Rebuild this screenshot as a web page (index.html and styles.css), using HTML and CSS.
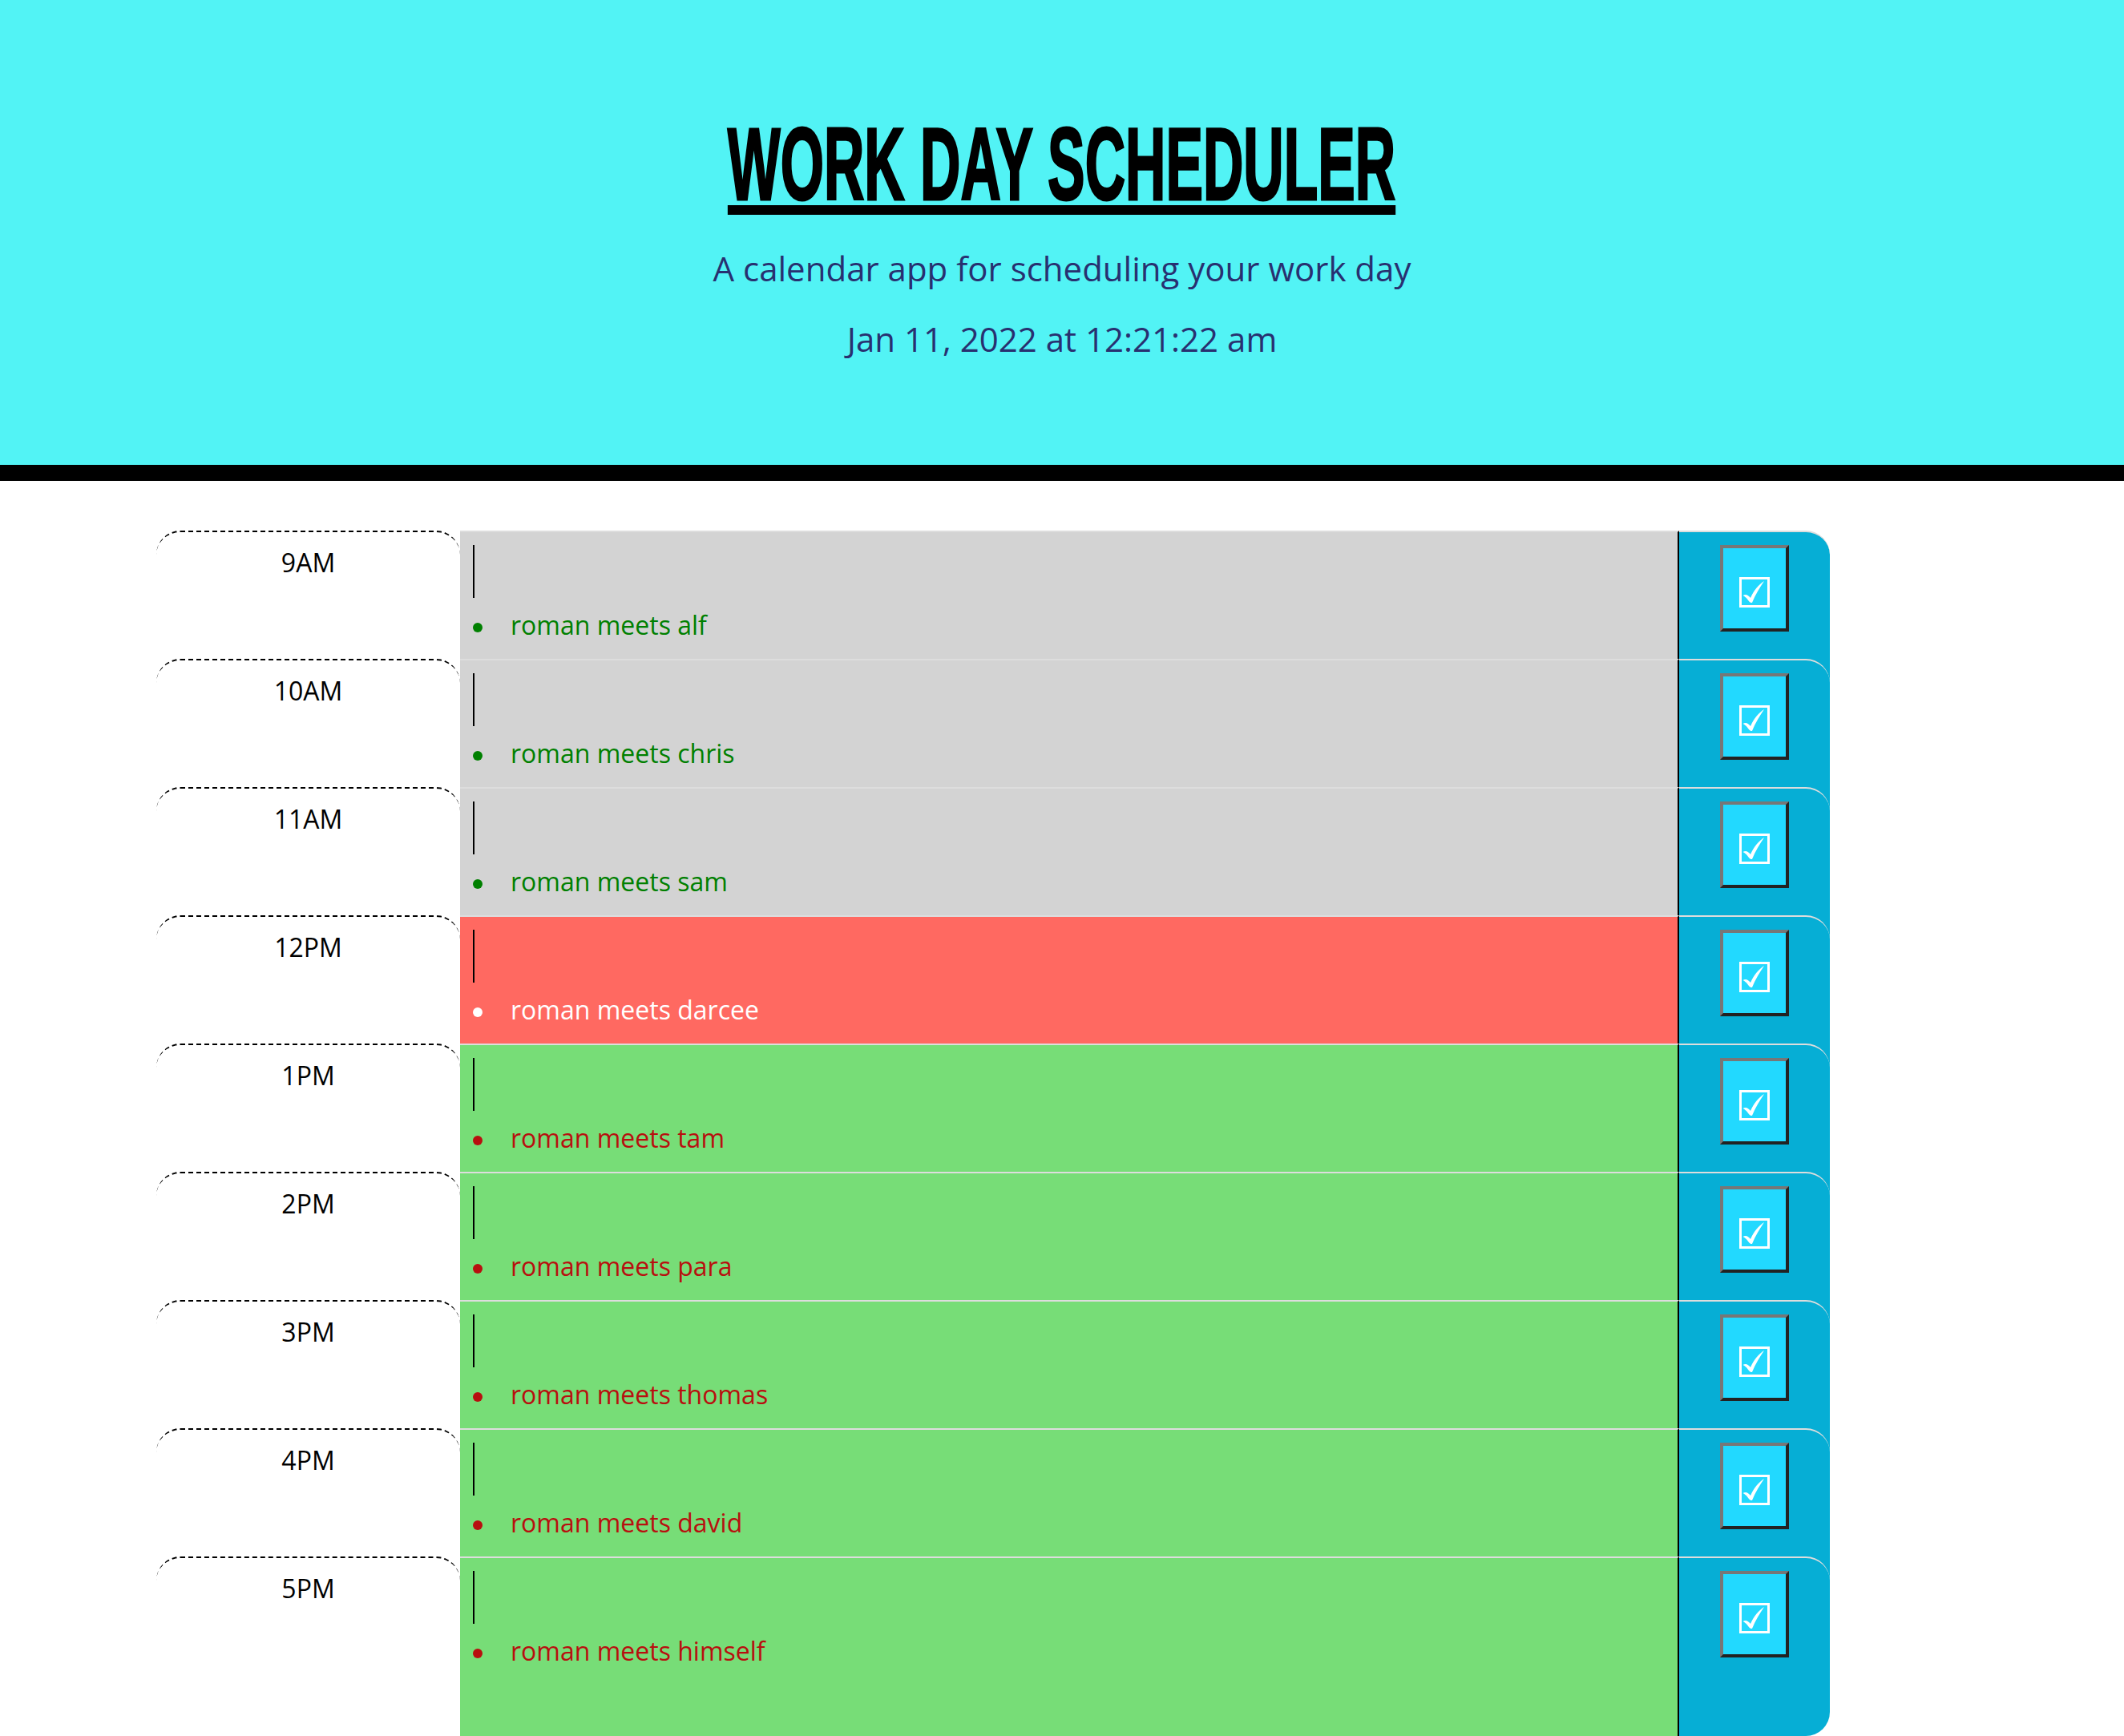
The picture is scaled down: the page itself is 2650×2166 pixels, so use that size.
FILE: index.html
```html
<!DOCTYPE html>
<html lang="en">
<head>
<meta charset="utf-8">
<title>Work Day Scheduler</title>
<link rel="stylesheet" href="styles.css">
</head>
<body>
<header class="header">
  <h1 class="title"><span class="title-text">WORK DAY SCHEDULER</span></h1>
  <p class="lead">A calendar app for scheduling your work day</p>
  <p class="date">Jan 11, 2022 at 12:21:22 am</p>
</header>
<main class="schedule">
  <div class="row">
    <div class="hour">9AM</div>
    <div class="description past"><textarea class="note"></textarea><ul class="items"><li class="item">roman meets alf</li></ul></div>
    <div class="save-col"><button class="save-btn"><svg class="check" viewBox="0 0 38 38" width="38" height="38"><rect x="1.5" y="1.5" width="35" height="35" fill="none" stroke="#fff" stroke-width="3"/><path d="M4.5 23 C8 20.5 11.5 22.5 14 26 C18 17 24 9.5 31 5 C26 12.5 20 22 16 32 C13.5 32.5 12 30 10 27.5 C8.5 25.5 6.5 24 4.5 23 Z" fill="#fff"/></svg></button></div>
  </div>
  <div class="row">
    <div class="hour">10AM</div>
    <div class="description past"><textarea class="note"></textarea><ul class="items"><li class="item">roman meets chris</li></ul></div>
    <div class="save-col"><button class="save-btn"><svg class="check" viewBox="0 0 38 38" width="38" height="38"><rect x="1.5" y="1.5" width="35" height="35" fill="none" stroke="#fff" stroke-width="3"/><path d="M4.5 23 C8 20.5 11.5 22.5 14 26 C18 17 24 9.5 31 5 C26 12.5 20 22 16 32 C13.5 32.5 12 30 10 27.5 C8.5 25.5 6.5 24 4.5 23 Z" fill="#fff"/></svg></button></div>
  </div>
  <div class="row">
    <div class="hour">11AM</div>
    <div class="description past"><textarea class="note"></textarea><ul class="items"><li class="item">roman meets sam</li></ul></div>
    <div class="save-col"><button class="save-btn"><svg class="check" viewBox="0 0 38 38" width="38" height="38"><rect x="1.5" y="1.5" width="35" height="35" fill="none" stroke="#fff" stroke-width="3"/><path d="M4.5 23 C8 20.5 11.5 22.5 14 26 C18 17 24 9.5 31 5 C26 12.5 20 22 16 32 C13.5 32.5 12 30 10 27.5 C8.5 25.5 6.5 24 4.5 23 Z" fill="#fff"/></svg></button></div>
  </div>
  <div class="row">
    <div class="hour">12PM</div>
    <div class="description present"><textarea class="note"></textarea><ul class="items"><li class="item">roman meets darcee</li></ul></div>
    <div class="save-col"><button class="save-btn"><svg class="check" viewBox="0 0 38 38" width="38" height="38"><rect x="1.5" y="1.5" width="35" height="35" fill="none" stroke="#fff" stroke-width="3"/><path d="M4.5 23 C8 20.5 11.5 22.5 14 26 C18 17 24 9.5 31 5 C26 12.5 20 22 16 32 C13.5 32.5 12 30 10 27.5 C8.5 25.5 6.5 24 4.5 23 Z" fill="#fff"/></svg></button></div>
  </div>
  <div class="row">
    <div class="hour">1PM</div>
    <div class="description future"><textarea class="note"></textarea><ul class="items"><li class="item">roman meets tam</li></ul></div>
    <div class="save-col"><button class="save-btn"><svg class="check" viewBox="0 0 38 38" width="38" height="38"><rect x="1.5" y="1.5" width="35" height="35" fill="none" stroke="#fff" stroke-width="3"/><path d="M4.5 23 C8 20.5 11.5 22.5 14 26 C18 17 24 9.5 31 5 C26 12.5 20 22 16 32 C13.5 32.5 12 30 10 27.5 C8.5 25.5 6.5 24 4.5 23 Z" fill="#fff"/></svg></button></div>
  </div>
  <div class="row">
    <div class="hour">2PM</div>
    <div class="description future"><textarea class="note"></textarea><ul class="items"><li class="item">roman meets para</li></ul></div>
    <div class="save-col"><button class="save-btn"><svg class="check" viewBox="0 0 38 38" width="38" height="38"><rect x="1.5" y="1.5" width="35" height="35" fill="none" stroke="#fff" stroke-width="3"/><path d="M4.5 23 C8 20.5 11.5 22.5 14 26 C18 17 24 9.5 31 5 C26 12.5 20 22 16 32 C13.5 32.5 12 30 10 27.5 C8.5 25.5 6.5 24 4.5 23 Z" fill="#fff"/></svg></button></div>
  </div>
  <div class="row">
    <div class="hour">3PM</div>
    <div class="description future"><textarea class="note"></textarea><ul class="items"><li class="item">roman meets thomas</li></ul></div>
    <div class="save-col"><button class="save-btn"><svg class="check" viewBox="0 0 38 38" width="38" height="38"><rect x="1.5" y="1.5" width="35" height="35" fill="none" stroke="#fff" stroke-width="3"/><path d="M4.5 23 C8 20.5 11.5 22.5 14 26 C18 17 24 9.5 31 5 C26 12.5 20 22 16 32 C13.5 32.5 12 30 10 27.5 C8.5 25.5 6.5 24 4.5 23 Z" fill="#fff"/></svg></button></div>
  </div>
  <div class="row">
    <div class="hour">4PM</div>
    <div class="description future"><textarea class="note"></textarea><ul class="items"><li class="item">roman meets david</li></ul></div>
    <div class="save-col"><button class="save-btn"><svg class="check" viewBox="0 0 38 38" width="38" height="38"><rect x="1.5" y="1.5" width="35" height="35" fill="none" stroke="#fff" stroke-width="3"/><path d="M4.5 23 C8 20.5 11.5 22.5 14 26 C18 17 24 9.5 31 5 C26 12.5 20 22 16 32 C13.5 32.5 12 30 10 27.5 C8.5 25.5 6.5 24 4.5 23 Z" fill="#fff"/></svg></button></div>
  </div>
  <div class="row row-last">
    <div class="hour">5PM</div>
    <div class="description future"><textarea class="note"></textarea><ul class="items"><li class="item">roman meets himself</li></ul></div>
    <div class="save-col"><button class="save-btn"><svg class="check" viewBox="0 0 38 38" width="38" height="38"><rect x="1.5" y="1.5" width="35" height="35" fill="none" stroke="#fff" stroke-width="3"/><path d="M4.5 23 C8 20.5 11.5 22.5 14 26 C18 17 24 9.5 31 5 C26 12.5 20 22 16 32 C13.5 32.5 12 30 10 27.5 C8.5 25.5 6.5 24 4.5 23 Z" fill="#fff"/></svg></button></div>
  </div>
</main>
</body>
</html>
```

FILE: styles.css
```css
* {
  box-sizing: border-box;
}

html,
body {
  margin: 0;
  padding: 0;
}

body {
  font-family: "Open Sans", "Liberation Sans", sans-serif;
  background: #ffffff;
  color: #000000;
}

.header {
  height: 600px;
  background: #52f3f5;
  border-bottom: 20px solid #000000;
  text-align: center;
  padding-top: 141px;
}

.title {
  margin: 0;
  font-family: "Liberation Sans", Arial, sans-serif;
  font-weight: 700;
  font-size: 128px;
  line-height: 128px;
  color: #000000;
}

.title-text {
  display: inline-block;
  transform: scaleX(0.545);
  -webkit-text-stroke: 3px #000000;
  text-decoration: underline;
  text-decoration-thickness: 12px;
  text-underline-offset: 7px;
}

.lead,
.date {
  font-size: 42px;
  line-height: 42px;
  color: #283070;
}

.lead {
  margin: 45px 0 0;
}

.date {
  margin: 46px 0 0;
}

.schedule {
  padding: 62px 0 0 195px;
}

.row {
  display: flex;
  height: 160px;
}

/* the save column of the row above continues behind the rounded corner */
.row + .row {
  background: linear-gradient(#06aed5, #06aed5) no-repeat 1900px 0 / 188px 40px;
}

.row-last {
  height: 224px;
}

.hour {
  flex: 0 0 379px;
  background: #ffffff;
  border-top: 2px dashed #000000;
  border-radius: 30px 30px 0 0;
  text-align: center;
  font-size: 32px;
  line-height: 32px;
  padding-top: 22px;
}

.description {
  flex: 0 0 1521px;
  border-top: 2px solid #dddddd;
  border-right: 2px solid #000000;
  padding: 16px 0 0 16px;
}

.past {
  background: #d3d3d3;
  color: #008000;
}

.present {
  background: #ff6961;
  color: #ffffff;
}

.future {
  background: #77dd77;
  color: #b80f0f;
}

.note {
  display: block;
  width: 600px;
  height: 66px;
  margin: 0;
  padding: 0;
  border: none;
  border-left: 2px solid #000000;
  background: transparent;
  resize: none;
  outline: none;
}

.items {
  list-style: none;
  margin: 18px 0 0;
  padding: 0;
  font-size: 32px;
  line-height: 32px;
}

.item::before {
  content: "";
  display: inline-block;
  width: 12px;
  height: 12px;
  border-radius: 50%;
  background: currentColor;
  vertical-align: middle;
  margin-right: 35px;
}

.save-col {
  flex: 0 0 188px;
  background: #06aed5;
  border-top: 2px solid #dddddd;
  border-radius: 0 30px 0 0;
  padding-top: 16px;
  display: flex;
  justify-content: center;
  align-items: flex-start;
}

.row-last .save-col {
  border-radius: 0 30px 30px 0;
}

.save-btn {
  width: 86px;
  height: 108px;
  margin: 0;
  padding: 10px 0 0;
  border: 4px solid;
  border-color: #777777 #222222 #222222 #777777;
  background: #22d9ff;
  display: flex;
  align-items: center;
  justify-content: center;
}

.check {
  display: block;
}
```
